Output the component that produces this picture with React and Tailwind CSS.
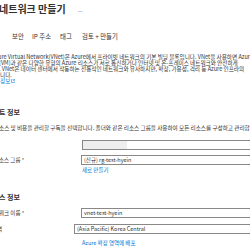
import React from "react";

const font = "font-['Noto_Sans_CJK_KR','Noto_Sans',sans-serif]";

function Field({ label, labelShift = "", value, muted, className = "" }) {
  return (
    <div className={"flex items-center " + className}>
      <div className={"w-[82px] shrink-0 text-[5.5px] leading-[6px] whitespace-nowrap " + labelShift}>
        {label}
      </div>
      <div className="flex-1 min-w-0 h-[10px] border border-[#8a8886] bg-white flex items-center pl-[2px] text-[5.5px] whitespace-nowrap overflow-hidden -mr-[20px]">
        {muted ? <div className="h-full w-[44px] -ml-[2px] bg-[#eeeeee]" /> : value}
      </div>
    </div>
  );
}

export default function App() {
  return (
    <div className={"w-[250px] h-[250px] overflow-hidden bg-white text-[#323130] " + font}>
      <div className="flex items-end mt-[3px] h-[11px]">
        <h1 className="text-[10px] leading-[11px] font-semibold whitespace-nowrap -ml-[1px]">네트워크 만들기</h1>
        <span className="ml-[12px] text-[6px] leading-[8px] text-[#605e5c]">...</span>
      </div>

      <div className="flex ml-[12px] mt-[20px] text-[6.4px] leading-[6px] text-[#323130] whitespace-nowrap">
        <span className="w-[20px] shrink-0">보안</span>
        <span className="w-[28px] shrink-0">IP 주소</span>
        <span className="w-[22px] shrink-0">태그</span>
        <span className="shrink-0">검토 + 만들기</span>
      </div>

      <div className="mt-[14px] text-[5.6px] leading-[6px] whitespace-nowrap overflow-hidden">
        <div className="-ml-[8px]">Azure Virtual Network(VNet)은 Azure에서 프라이빗 네트워크의 기본 빌딩 블록입니다. VNet을 사용하면 Azure Virtual</div>
        <div className="-ml-[1px]">(VM)과 같은 다양한 유형의 Azure 리소스가 서로 통신하거나 인터넷 및 온-프레미스 네트워크와 안전하게</div>
        <div className="-ml-[1px]">. VNet은 데이터 센터에서 작동하는 전통적인 네트워크와 유사하지만, 확장, 가용성, 격리 등 Azure 인프라의</div>
        <div>니다.</div>
        <div className="text-[#0078d4] flex items-center gap-[1px]">
          정보
          <svg width="4" height="4" viewBox="0 0 8 8" fill="none" stroke="#0078d4" strokeWidth="1">
            <path d="M3 1H1v6h6V5M4.5 1H7v2.5M7 1L3.5 4.5" />
          </svg>
        </div>
      </div>

      <h2 className="mt-[24px] -ml-[1px] text-[7px] leading-[8px] font-semibold whitespace-nowrap">트 정보</h2>
      <p className="mt-[9px] -ml-[1px] text-[5.6px] leading-[6px] whitespace-nowrap overflow-hidden">
        소스 및 비용을 관리할 구독을 선택합니다. 폴더와 같은 리소스 그룹을 사용하여 모든 리소스를 구성하고 관리합니다.
      </p>

      <Field className="mt-[9px]" label="" muted />
      <Field className="mt-[5px]" label="소스 그룹 *" labelShift="-ml-[1px]" value="(신규) rg-test-hyein" />
      <div className="ml-[82px] mt-[2px] text-[5.5px] leading-[6px] text-[#0078d4] whitespace-nowrap">새로 만들기</div>

      <h2 className="mt-[20px] -ml-[1px] text-[7px] leading-[8px] font-semibold whitespace-nowrap">스 정보</h2>

      <Field className="mt-[7px]" label="워크 이름 *" labelShift="-ml-[1px]" value="vnet-test-hyein" />
      <Field className="mt-[6px]" label="지역" labelShift="-ml-[8px]" value="(Asia Pacific) Korea Central" />
      <div className="ml-[82px] mt-[6px] text-[5.5px] leading-[6px] text-[#0078d4] whitespace-nowrap">Azure 확장 영역에 배포</div>
    </div>
  );
}
